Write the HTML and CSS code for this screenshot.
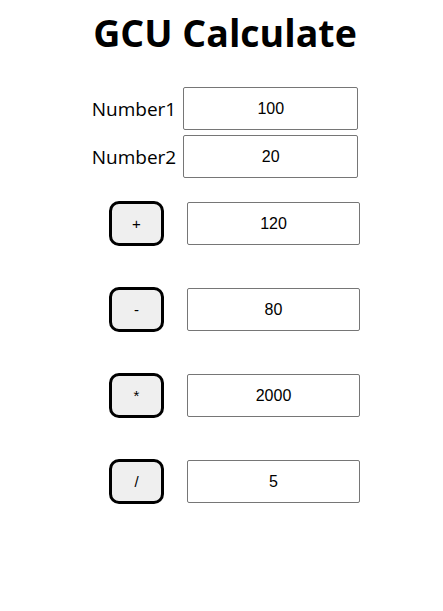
FILE: index.html
```html
<!DOCTYPE html>
<html>
<head>
<meta charset="utf-8">
<link rel="stylesheet" href="styles.css">
</head>
<body>
<div class="page">
  <h1 class="title">GCU Calculate</h1>
  <div class="inputs">
    <label class="label">Number1</label>
    <input class="field" type="text" value="100">
    <label class="label">Number2</label>
    <input class="field" type="text" value="20">
  </div>
  <div class="ops">
    <div class="op-row">
      <button class="op-btn">+</button>
      <input class="result" type="text" value="120">
    </div>
    <div class="op-row">
      <button class="op-btn">-</button>
      <input class="result" type="text" value="80">
    </div>
    <div class="op-row">
      <button class="op-btn">*</button>
      <input class="result" type="text" value="2000">
    </div>
    <div class="op-row">
      <button class="op-btn">/</button>
      <input class="result" type="text" value="5">
    </div>
  </div>
</div>
</body>
</html>
```
FILE: styles.css
```css
html, body {
  margin: 0;
  padding: 0;
  background: #fff;
}
.page {
  font-family: "Open Sans", "Noto Sans", sans-serif;
  color: #000;
  display: flex;
  flex-direction: column;
  align-items: center;
  padding-left: 7px;
}
.title {
  margin: 6px 0 0 0;
  font-size: 37.5px;
  font-weight: 700;
  line-height: 54px;
}
.inputs {
  margin-top: 27px;
  display: grid;
  grid-template-columns: auto 175px;
  column-gap: 7px;
  row-gap: 5px;
  align-items: center;
}
.label {
  font-size: 19px;
}
.field, .result {
  box-sizing: border-box;
  height: 43px;
  border: 1px solid #767676;
  border-radius: 2px;
  font-family: "Liberation Sans", Arial, sans-serif;
  font-size: 16px;
  text-align: center;
  color: #000;
  background: #fff;
  padding: 0;
  margin: 0;
}
.ops {
  margin-top: 23px;
  display: flex;
  flex-direction: column;
  gap: 41px;
  padding-left: 19px;
}
.op-row {
  display: flex;
  align-items: center;
  gap: 23px;
}
.op-btn {
  box-sizing: border-box;
  width: 55px;
  height: 45px;
  border: 3px solid #000;
  border-radius: 10px;
  background: #efefef;
  font-family: "Liberation Sans", Arial, sans-serif;
  font-size: 15px;
  color: #000;
  padding: 0;
  margin: 0;
}
.result {
  width: 173px;
}
```
